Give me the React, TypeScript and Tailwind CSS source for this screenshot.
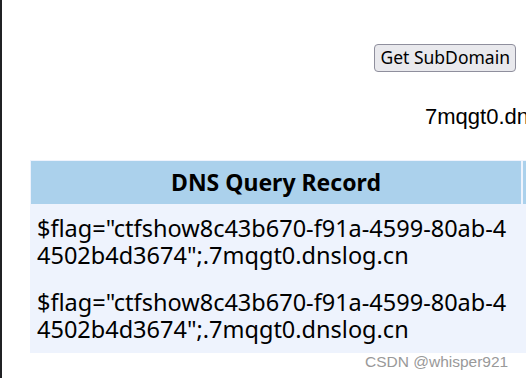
import React from "react";

const rows = [
  ['$flag="ctfshow8c43b670-f91a-4599-80ab-4', '4502b4d3674";.7mqgt0.dnslog.cn'],
  ['$flag="ctfshow8c43b670-f91a-4599-80ab-4', '4502b4d3674";.7mqgt0.dnslog.cn'],
];

const App: React.FC = () => {
  return (
    <div className="relative w-[526px] h-[378px] overflow-hidden bg-white flex">
      <div className="w-[2px] h-full bg-[#202124] shrink-0" />
      <div className="w-[524px] shrink-0 flex flex-col overflow-hidden">
        <div className="h-[44px] shrink-0" />
        <div className="flex justify-end pr-[10px]">
          <button className="h-[28px] px-[5px] rounded-[4px] border border-[#8f8f9d] bg-[#e9e9ed] text-[17.5px] leading-none text-black font-['Noto_Sans',sans-serif]">
            Get SubDomain
          </button>
        </div>
        <div className="mt-[32px] pl-[423px] whitespace-nowrap text-[22px] leading-[26px] text-black font-['Liberation_Sans',sans-serif]">
          7mqgt0.dnslog.cn
        </div>
        <div className="mt-[30px] ml-[28px] w-[600px] bg-[#eef3fd] p-[1px] flex gap-[2px]">
          <div className="w-[490px] shrink-0 flex flex-col gap-[2px] font-['Noto_Sans','Noto_Sans_CJK_SC',sans-serif]">
            <div className="h-[43px] bg-[#abd1ec] flex items-center justify-center text-[23px] font-bold text-black">
              DNS Query Record
            </div>
            {rows.map((r, i) => (
              <div key={i} className="px-[6px] py-[9px] text-[23.5px] leading-[27px] text-black whitespace-nowrap">
                {r[0]}
                <br />
                {r[1]}
              </div>
            ))}
          </div>
          <div className="flex-1">
            <div className="h-[43px] bg-[#abd1ec]" />
          </div>
        </div>
      </div>
      <div className="absolute left-[365px] top-[350px] text-[15.5px] text-[#999999] font-['Liberation_Sans',sans-serif]">
        CSDN @whisper921
      </div>
    </div>
  );
};

export default App;
